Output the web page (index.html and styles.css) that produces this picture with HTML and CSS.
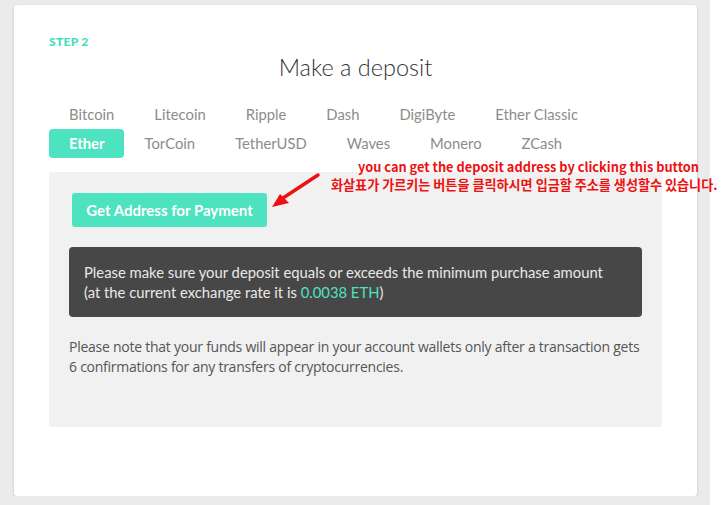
FILE: index.html
```html
<!DOCTYPE html>
<html lang="en">
<head>
    <meta charset="UTF-8">
    <meta name="viewport" content="width=device-width, initial-scale=1.0">
    <title>Make a deposit</title>
    <link rel="stylesheet" href="styles.css">
</head>
<body>
    <div class="page">
        <div class="card">
            <div class="step">STEP 2</div>
            <h1>Make a deposit</h1>
            <div class="tabs">
                <span class="tab">Bitcoin</span>
                <span class="tab">Litecoin</span>
                <span class="tab">Ripple</span>
                <span class="tab">Dash</span>
                <span class="tab">DigiByte</span>
                <span class="tab">Ether Classic</span>
                <span class="tab active">Ether</span>
                <span class="tab">TorCoin</span>
                <span class="tab">TetherUSD</span>
                <span class="tab">Waves</span>
                <span class="tab">Monero</span>
                <span class="tab">ZCash</span>
            </div>
            <div class="panel">
                <button type="button" class="get-address">Get Address for Payment</button>
                <div class="notice">
                    Please make sure your deposit equals or exceeds the minimum purchase amount<br>
                    (at the current exchange rate it is <span class="amount">0.0038 ETH</span>)
                </div>
                <p class="note">
                    Please note that your funds will appear in your account wallets only after a transaction gets<br>
                    6 confirmations for any transfers of cryptocurrencies.
                </p>
            </div>

            <!-- annotation over the page -->
            <div class="hint">
                <div class="hint-en">you can get the deposit address by clicking this button</div>
                <div class="hint-ko">화살표가 가르키는 버튼을 클릭하시면 입금할 주소를 생성할수 있습니다.</div>
            </div>
            <svg class="arrow" width="60" height="45" viewBox="0 0 60 45">
                <line x1="54" y1="5" x2="16" y2="30" stroke="#ee1111" stroke-width="3.5" stroke-linecap="round"/>
                <polygon points="8,37 16,24 25,33" fill="#ee1111"/>
            </svg>
        </div>
    </div>
</body>
</html>
```

FILE: styles.css
```css
html {
    background: linear-gradient(to right, #ebebeb 710px, #ffffff 710px);
}
body {
    margin: 0;
    font-family: Lato, "Open Sans", sans-serif;
}
.page {
    padding: 5px 0 0 14px;
}
.card {
    position: relative;
    box-sizing: border-box;
    width: 683px;
    height: 491px;
    padding: 30px 35px 0 35px;
    background: #fff;
    border-radius: 3px;
    box-shadow: 0 1px 3px rgba(0, 0, 0, 0.18);
}
.step {
    font-size: 12px;
    line-height: 14px;
    font-weight: 900;
    color: #3fe0b9;
    letter-spacing: 0.3px;
}
h1 {
    margin: 3px 0 0;
    text-align: center;
    font-size: 23.5px;
    line-height: 30px;
    font-weight: 300;
    color: #333;
}
.tabs {
    display: flex;
    flex-wrap: wrap;
    width: 560px;
    margin-top: 18px;
}
.tab {
    padding: 0 20px;
    height: 29px;
    line-height: 29px;
    font-size: 14.8px;
    color: #8c8c8c;
    border-radius: 4px;
}
.tab.active {
    background: #4de2c0;
    color: #fff;
    font-weight: 700;
}
.panel {
    box-sizing: border-box;
    height: 255px;
    margin-top: 14px;
    padding: 21px 20px;
    background: #f1f1f1;
    border-radius: 3px;
}
.get-address {
    display: block;
    width: 195px;
    height: 34px;
    margin-left: 3px;
    padding: 0;
    border: none;
    border-radius: 3px;
    background: #4de2c0;
    color: #fff;
    font-family: Lato, sans-serif;
    font-size: 15px;
    font-weight: 700;
}
.notice {
    margin-top: 20px;
    padding: 15px 15px;
    background: #474747;
    border-radius: 4px;
    color: #e9e9e9;
    font-size: 14.8px;
    line-height: 20px;
}
.amount {
    color: #4de2c0;
}
.note {
    margin: 20px 0 0;
    font-family: "Open Sans", sans-serif;
    font-size: 14px;
    line-height: 20px;
    letter-spacing: -0.25px;
    color: #555;
}
.hint {
    position: absolute;
    left: 317px;
    top: 153px;
    font-family: "Noto Sans CJK KR", "Noto Sans", sans-serif;
    font-weight: 700;
    line-height: 18px;
    color: #ee1111;
    white-space: nowrap;
}
.hint-en {
    margin-left: 27px;
    font-size: 12.8px;
}
.hint-ko {
    font-size: 13.1px;
}
.arrow {
    position: absolute;
    left: 250px;
    top: 165px;
}
```
